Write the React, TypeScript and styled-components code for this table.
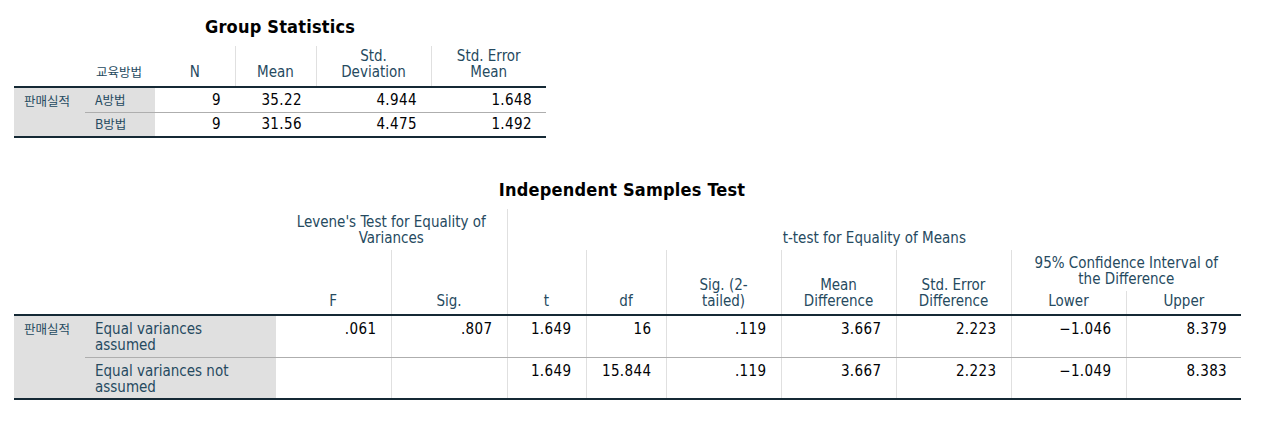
import styled, { createGlobalStyle } from 'styled-components';

const GlobalStyle = createGlobalStyle`
    body {
        margin: 0;
        background: #ffffff;
        font-family: "DejaVu Sans Condensed", "Noto Sans", "Noto Sans CJK KR", sans-serif;
    }
`;

const Page = styled.div`
    padding: 17px 0 0 14px;
    display: flex;
    flex-direction: column;
    align-items: flex-start;
`;

const Section = styled.section<{ $gap?: number }>`
    display: flex;
    flex-direction: column;
    align-items: center;
    margin-bottom: ${(p) => p.$gap ?? 0}px;
`;

const Title = styled.h2<{ $shift?: number }>`
    margin: 0 ${(p) => p.$shift ?? 0}px 9px 0;
    font-size: 18px;
    line-height: 20px;
    font-weight: bold;
    letter-spacing: 0.2px;
    color: #000000;
`;

const Table = styled.table<{ $w: number }>`
    width: ${(p) => p.$w}px;
    table-layout: fixed;
    border-collapse: collapse;
    font-size: 15px;
    line-height: 16px;
`;

const Col = styled.col<{ $w: number }>`
    width: ${(p) => p.$w}px;
`;

const Row = styled.tr<{ $h: number }>`
    height: ${(p) => p.$h}px;
`;

const Hangul = styled.span`
    font-family: "Noto Sans CJK KR", "Noto Sans", sans-serif;
    font-size: 12.5px;
    white-space: nowrap;
`;

const Head = styled.th<{ $align?: string; $line?: boolean; $base?: boolean; $pb?: number }>`
    font-weight: normal;
    color: #264a60;
    text-align: ${(p) => p.$align ?? 'center'};
    vertical-align: bottom;
    padding: 0 6px ${(p) => p.$pb ?? 5}px ${(p) => (p.$align === 'left' ? 11 : 6)}px;
    border-left: ${(p) => (p.$line ? '1px solid #e0e0e0' : 'none')};
    border-bottom: ${(p) => (p.$base ? '2px solid #152935' : 'none')};
`;

const Label = styled.td<{ $top?: boolean; $divide?: boolean; $last?: boolean; $pr?: number }>`
    background: #e0e0e0;
    color: #264a60;
    text-align: left;
    vertical-align: ${(p) => (p.$top ? 'top' : 'middle')};
    padding: ${(p) => (p.$top ? 5 : 0)}px ${(p) => p.$pr ?? 4}px 0 10px;
    border-bottom: ${(p) =>
        p.$last ? '2px solid #152935' : p.$divide ? '1px solid #aeaeae' : 'none'};
`;

const Value = styled.td<{ $top?: boolean; $line?: boolean; $divide?: boolean; $last?: boolean }>`
    color: #010205;
    text-align: right;
    vertical-align: ${(p) => (p.$top ? 'top' : 'middle')};
    padding: ${(p) => (p.$top ? 5 : 0)}px 14px 0 6px;
    letter-spacing: 0.4px;
    border-left: ${(p) => (p.$line ? '1px solid #e0e0e0' : 'none')};
    border-bottom: ${(p) =>
        p.$last ? '2px solid #152935' : p.$divide ? '1px solid #aeaeae' : 'none'};
`;

const groupRows = [
    { name: 'A방법', n: '9', mean: '35.22', sd: '4.944', se: '1.648' },
    { name: 'B방법', n: '9', mean: '31.56', sd: '4.475', se: '1.492' },
];

const testRows = [
    {
        name: 'Equal variances assumed',
        cells: ['.061', '.807', '1.649', '16', '.119', '3.667', '2.223', '−1.046', '8.379'],
    },
    {
        name: 'Equal variances not assumed',
        cells: ['', '', '1.649', '15.844', '.119', '3.667', '2.223', '−1.049', '8.383'],
    },
];

const GroupStatistics = () => (
    <Section $gap={42}>
        <Title>Group Statistics</Title>
        <Table $w={532}>
            <colgroup>
                <Col $w={71} />
                <Col $w={70} />
                <Col $w={80} />
                <Col $w={81} />
                <Col $w={115} />
                <Col $w={115} />
            </colgroup>
            <thead>
                <Row $h={41}>
                    <Head $base />
                    <Head $base $align="left" $pb={6}><Hangul>교육방법</Hangul></Head>
                    <Head $base $pb={6}>N</Head>
                    <Head $base $line $pb={6}>Mean</Head>
                    <Head $base $line $pb={6}>Std.<br />Deviation</Head>
                    <Head $base $line $pb={6}>Std. Error<br />Mean</Head>
                </Row>
            </thead>
            <tbody>
                {groupRows.map((r, i) => {
                    const last = i === groupRows.length - 1;
                    return (
                        <Row $h={25} key={r.name}>
                            {i === 0 && (
                                <Label rowSpan={groupRows.length} $top $last>
                                    <Hangul>판매실적</Hangul>
                                </Label>
                            )}
                            <Label $divide={!last} $last={last}><Hangul>{r.name}</Hangul></Label>
                            <Value $divide={!last} $last={last}>{r.n}</Value>
                            <Value $divide={!last} $last={last}>{r.mean}</Value>
                            <Value $divide={!last} $last={last}>{r.sd}</Value>
                            <Value $divide={!last} $last={last}>{r.se}</Value>
                        </Row>
                    );
                })}
            </tbody>
        </Table>
    </Section>
);

const IndependentSamples = () => (
    <Section>
        <Title $shift={11}>Independent Samples Test</Title>
        <Table $w={1227}>
            <colgroup>
                <Col $w={71} />
                <Col $w={191} />
                <Col $w={115} />
                <Col $w={116} />
                <Col $w={79} />
                <Col $w={80} />
                <Col $w={115} />
                <Col $w={115} />
                <Col $w={115} />
                <Col $w={115} />
                <Col $w={115} />
            </colgroup>
            <thead>
                <Row $h={41}>
                    <Head colSpan={2} rowSpan={3} $base />
                    <Head colSpan={2} $pb={4}>Levene's Test for Equality of<br />Variances</Head>
                    <Head colSpan={7} $line $pb={4}>t-test for Equality of Means</Head>
                </Row>
                <Row $h={41}>
                    <Head rowSpan={2} $base>F</Head>
                    <Head rowSpan={2} $base $line>Sig.</Head>
                    <Head rowSpan={2} $base $line>t</Head>
                    <Head rowSpan={2} $base $line>df</Head>
                    <Head rowSpan={2} $base $line>Sig. (2-<br />tailed)</Head>
                    <Head rowSpan={2} $base $line>Mean<br />Difference</Head>
                    <Head rowSpan={2} $base $line>Std. Error<br />Difference</Head>
                    <Head colSpan={2} $line $pb={4}>95% Confidence Interval of<br />the Difference</Head>
                </Row>
                <Row $h={24}>
                    <Head $base $line>Lower</Head>
                    <Head $base $line>Upper</Head>
                </Row>
            </thead>
            <tbody>
                {testRows.map((r, i) => {
                    const last = i === testRows.length - 1;
                    return (
                        <Row $h={42} key={r.name}>
                            {i === 0 && (
                                <Label rowSpan={testRows.length} $top $last>
                                    <Hangul>판매실적</Hangul>
                                </Label>
                            )}
                            <Label $top $pr={40} $divide={!last} $last={last}>{r.name}</Label>
                            {r.cells.map((c, j) => (
                                <Value key={j} $top $line={j > 0} $divide={!last} $last={last}>
                                    {c}
                                </Value>
                            ))}
                        </Row>
                    );
                })}
            </tbody>
        </Table>
    </Section>
);

const App = () => (
    <Page>
        <GlobalStyle />
        <GroupStatistics />
        <IndependentSamples />
    </Page>
);

export default App;
